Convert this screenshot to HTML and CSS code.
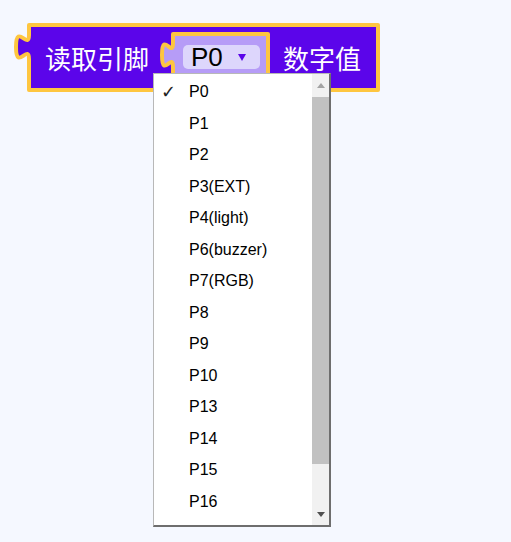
FILE: index.html
```html
<!DOCTYPE html>
<html lang="zh">
<head>
<meta charset="utf-8">
<title>Blockly</title>
<link rel="stylesheet" href="styles.css">
</head>
<body>
<div class="workspace">
  <div class="block">
    <svg class="block-shape" width="372" height="70" viewBox="0 0 372 70">
      <path d="M 18,2 V 12 c 0,16 -13,-13 -13,12 s 13,-4 13,12 V 67 H 367 V 2 Z"
            fill="#5b05ea" stroke="#fec640" stroke-width="4" stroke-linejoin="round"/>
      <path d="M 162,11 V 20 c 0,16 -11,-13 -11,12 s 11,-4 11,12 V 59 H 257 V 11 Z"
            fill="#b69cf7" stroke="#fec640" stroke-width="4" stroke-linejoin="round"/>
    </svg>
    <div class="block-row">
      <span class="label">读取引脚</span>
      <div class="field">
        <span class="field-text">P0</span>
        <span class="field-arrow"></span>
      </div>
      <span class="label label-right">数字值</span>
    </div>
  </div>

  <div class="menu">
    <ul class="menu-list">
      <li class="item selected"><span class="check">✓</span>P0</li>
      <li class="item">P1</li>
      <li class="item">P2</li>
      <li class="item">P3(EXT)</li>
      <li class="item">P4(light)</li>
      <li class="item">P6(buzzer)</li>
      <li class="item">P7(RGB)</li>
      <li class="item">P8</li>
      <li class="item">P9</li>
      <li class="item">P10</li>
      <li class="item">P13</li>
      <li class="item">P14</li>
      <li class="item">P15</li>
      <li class="item">P16</li>
    </ul>
    <div class="scrollbar">
      <div class="sb-btn"><span class="sb-up"></span></div>
      <div class="sb-track"><div class="sb-thumb"></div></div>
      <div class="sb-btn"><span class="sb-down"></span></div>
    </div>
  </div>
</div>
</body>
</html>
```

FILE: styles.css
```css
html, body {
  margin: 0;
  padding: 0;
  background: #f5f8ff;
}

.workspace {
  position: relative;
  width: 511px;
  height: 542px;
  padding: 23px 0 0 11px;
  box-sizing: border-box;
  font-family: "Liberation Sans", Arial, sans-serif;
}

.block {
  position: relative;
  width: 372px;
  height: 70px;
}

.block-shape {
  position: absolute;
  left: 0;
  top: 0;
}

.block-row {
  position: relative;
  display: flex;
  align-items: center;
  height: 69px;
  padding-left: 34px;
}

.label {
  font-family: "Noto Sans CJK SC", "Liberation Sans", sans-serif;
  font-size: 26px;
  color: #ffffff;
  line-height: 1;
}

.label-right {
  margin-left: 23px;
}

.field {
  display: flex;
  align-items: center;
  margin-left: 34px;
  width: 77px;
  height: 24px;
  box-sizing: border-box;
  padding-left: 8px;
  background: #ddd6fc;
  border-radius: 5px;
  margin-top: -1px;
}

.field-text {
  font-family: "Liberation Sans", Arial, sans-serif;
  font-size: 26px;
  line-height: 24px;
  color: #000000;
}

.field-arrow {
  width: 0;
  height: 0;
  margin-left: 15px;
  border-left: 4px solid transparent;
  border-right: 4px solid transparent;
  border-top: 7px solid #5b05ea;
}

.menu {
  position: absolute;
  left: 153px;
  top: 73px;
  width: 178px;
  height: 454px;
  box-sizing: border-box;
  display: flex;
  background: #ffffff;
  border: 1px solid #b8b8b8;
  border-right: 2px solid #6e6e6e;
  border-bottom: 2px solid #6e6e6e;
}

.menu-list {
  list-style: none;
  margin: 0;
  padding: 2px 0 0 0;
  flex: 1;
  overflow: hidden;
}

.item {
  position: relative;
  height: 31.5px;
  line-height: 31.5px;
  padding-left: 35px;
  font-size: 16px;
  color: #000000;
}

.check {
  position: absolute;
  left: 7px;
  top: 0;
  font-family: "DejaVu Sans", sans-serif;
  font-size: 18px;
  font-weight: bold;
  color: #222222;
}

.scrollbar {
  width: 17px;
  display: flex;
  flex-direction: column;
  background: #f1f1f1;
}

.sb-btn {
  height: 22px;
  display: flex;
  align-items: center;
  justify-content: center;
}

.sb-up {
  width: 0;
  height: 0;
  border-left: 4px solid transparent;
  border-right: 4px solid transparent;
  border-bottom: 5px solid #a3a3a3;
}

.sb-down {
  width: 0;
  height: 0;
  border-left: 4px solid transparent;
  border-right: 4px solid transparent;
  border-top: 5px solid #505050;
}

.sb-track {
  flex: 1;
  padding-top: 1px;
}

.sb-thumb {
  height: 367px;
  background: #c1c1c1;
}
```
